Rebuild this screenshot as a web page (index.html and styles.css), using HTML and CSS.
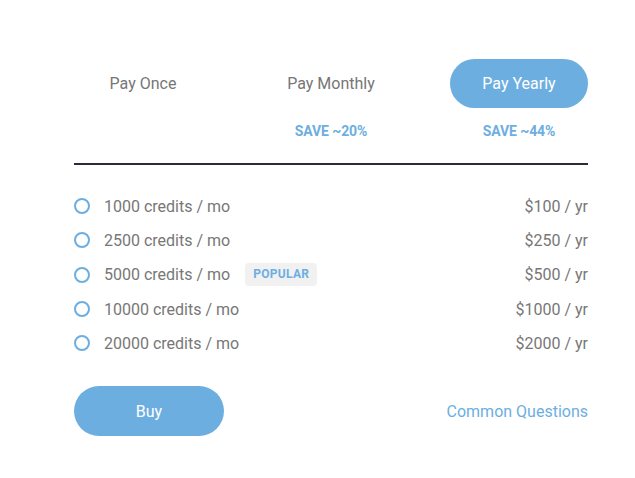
FILE: index.html
```html
<!DOCTYPE html>
<html>
<head>
<meta charset="utf-8">
<link rel="stylesheet" href="styles.css">
</head>
<body>
<div class="card">
  <div class="tabs">
    <div class="tab">Pay Once</div>
    <div class="tab">Pay Monthly</div>
    <div class="tab active">Pay Yearly</div>
  </div>
  <div class="saves">
    <div class="save"></div>
    <div class="save">SAVE ~20%</div>
    <div class="save">SAVE ~44%</div>
  </div>
  <div class="divider"></div>
  <ul class="plans">
    <li class="plan"><span class="radio"></span><span class="label">1000 credits / mo</span><span class="price">$100 / yr</span></li>
    <li class="plan"><span class="radio"></span><span class="label">2500 credits / mo</span><span class="price">$250 / yr</span></li>
    <li class="plan"><span class="radio"></span><span class="label">5000 credits / mo</span><span class="badge">POPULAR</span><span class="price">$500 / yr</span></li>
    <li class="plan"><span class="radio"></span><span class="label">10000 credits / mo</span><span class="price">$1000 / yr</span></li>
    <li class="plan"><span class="radio"></span><span class="label">20000 credits / mo</span><span class="price">$2000 / yr</span></li>
  </ul>
  <div class="footer">
    <button class="buy">Buy</button>
    <a class="faq" href="#">Common Questions</a>
  </div>
</div>
</body>
</html>
```

FILE: styles.css
```css
html, body {
  margin: 0;
  padding: 0;
  background: #ffffff;
}
body {
  font-family: Roboto, "Liberation Sans", sans-serif;
  color: #777777;
}
.card {
  width: 514px;
  margin-left: 74px;
  padding-top: 59px;
}
.tabs {
  display: flex;
  justify-content: space-between;
}
.tab {
  width: 138px;
  height: 49px;
  border-radius: 25px;
  display: flex;
  align-items: center;
  justify-content: center;
  font-size: 16px;
  color: #767676;
}
.tab.active {
  background: #6daee1;
  color: #ffffff;
}
.saves {
  display: flex;
  justify-content: space-between;
  margin-top: 15px;
}
.save {
  width: 138px;
  text-align: center;
  font-size: 14px;
  line-height: 16px;
  height: 16px;
  font-weight: 700;
  color: #6daee1;
  letter-spacing: -0.1px;
}
.divider {
  margin-top: 24px;
  height: 2px;
  background: #2e2a3b;
}
.plans {
  list-style: none;
  margin: 24px 0 0;
  padding: 0;
}
.plan {
  display: flex;
  align-items: center;
  height: 34.3px;
  font-size: 16px;
  color: #777777;
}
.radio {
  width: 16px;
  height: 16px;
  box-sizing: border-box;
  border: 2px solid #6daee1;
  border-radius: 50%;
  margin-right: 14px;
  flex: none;
}
.badge {
  margin-left: 15px;
  background: #f1f1f1;
  color: #6daee1;
  font-size: 12px;
  font-weight: 700;
  letter-spacing: 0.3px;
  height: 23px;
  line-height: 23px;
  padding: 0 8px;
  border-radius: 4px;
}
.price {
  margin-left: auto;
}
.footer {
  margin-top: 26px;
  display: flex;
  align-items: center;
  justify-content: space-between;
}
.buy {
  width: 150px;
  height: 50px;
  border: none;
  border-radius: 25px;
  background: #6daee1;
  color: #ffffff;
  font-family: Roboto, "Liberation Sans", sans-serif;
  font-size: 16px;
  padding: 0;
}
.faq {
  color: #6daee1;
  font-size: 16px;
  text-decoration: none;
}
```
